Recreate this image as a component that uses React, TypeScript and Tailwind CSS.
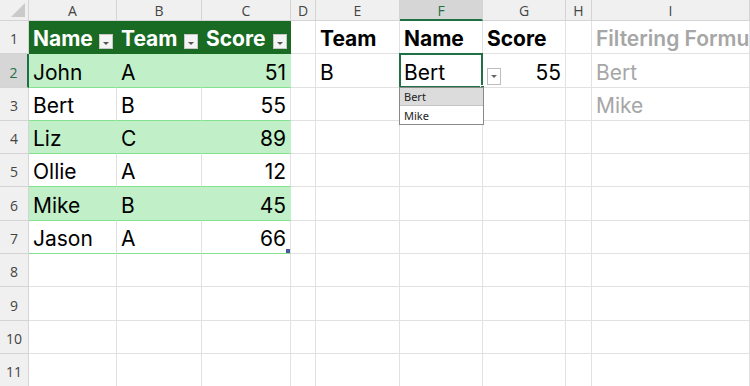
import React from 'react';

type Cell = {
  text?: string;
  align?: 'left' | 'right';
  kind?: 'th' | 'band' | 'plain' | 'bold' | 'faint' | 'faintBold';
  lastCol?: boolean;
  filter?: boolean;
};

const COLS = ['A', 'B', 'C', 'D', 'E', 'F', 'G', 'H', 'I'];

const people = [
  ['John', 'A', '51'],
  ['Bert', 'B', '55'],
  ['Liz', 'C', '89'],
  ['Ollie', 'A', '12'],
  ['Mike', 'B', '45'],
  ['Jason', 'A', '66'],
];

function buildRows(): Cell[][] {
  const rows: Cell[][] = [];
  rows.push([
    { text: 'Name', kind: 'th', filter: true },
    { text: 'Team', kind: 'th', filter: true },
    { text: 'Score', kind: 'th', filter: true, lastCol: true },
    {},
    { text: 'Team', kind: 'bold' },
    { text: 'Name', kind: 'bold' },
    { text: 'Score', kind: 'bold' },
    {},
    { text: 'Filtering Formula', kind: 'faintBold' },
  ]);
  people.forEach(([name, team, score], i) => {
    const kind = i % 2 === 0 ? 'band' : 'plain';
    const row: Cell[] = [
      { text: name, kind },
      { text: team, kind },
      { text: score, kind, align: 'right', lastCol: true },
      {},
      {},
      {},
      {},
      {},
      {},
    ];
    if (i === 0) {
      row[4] = { text: 'B' };
      row[5] = { text: 'Bert' };
      row[6] = { text: '55', align: 'right' };
      row[8] = { text: 'Bert', kind: 'faint' };
    }
    if (i === 1) row[8] = { text: 'Mike', kind: 'faint' };
    rows.push(row);
  });
  for (let i = 0; i < 4; i++) rows.push([{}, {}, {}, {}, {}, {}, {}, {}, {}]);
  return rows;
}

function FilterButton() {
  return (
    <div className="absolute right-[3px] bottom-[4px] w-[14px] h-[15px] bg-[#f4f4f4] border border-[#c8c8c8] flex items-end justify-center pb-[3px]">
      <svg width="6" height="3" viewBox="0 0 6 3">
        <polygon points="0,0 6,0 3,3" fill="#555" />
      </svg>
    </div>
  );
}

function cellClass(c: Cell, r: number) {
  const base =
    'relative flex items-end px-[4px] pb-[4px] text-[21px] leading-none whitespace-nowrap border-b border-r';
  let cls = base;
  if (c.kind === 'th') cls += ' bg-[#196b24] text-white font-bold border-b-[#196b24] border-r-[#196b24]';
  else if (c.kind === 'band') cls += ' bg-[#c1f0c8] text-black border-b-[#83e28e] border-r-[#c1f0c8]';
  else if (c.kind === 'plain') cls += ' bg-white text-black border-b-[#83e28e] border-r-[#e1e1e1]';
  else if (c.kind === 'bold') cls += ' text-black font-bold border-[#e1e1e1]';
  else if (c.kind === 'faint') cls += ' text-[#a6a6a6] border-[#e1e1e1] overflow-hidden';
  else if (c.kind === 'faintBold') cls += ' text-[#a6a6a6] font-semibold border-[#e1e1e1] overflow-hidden';
  else cls += ' text-black border-[#e1e1e1]';
  if (c.lastCol) cls += ' border-r-[#83e28e]';
  if (c.align === 'right') cls += ' justify-end';
  if (r === 7 && c.kind) cls += ' border-b-[#83e28e]';
  return cls;
}

export default function App() {
  const rows = buildRows();

  return (
    <div
      className="w-[750px] h-[386px] overflow-hidden bg-white grid grid-cols-[29px_88px_85px_89px_25px_84px_83px_83px_26px_1fr] grid-rows-[21px_repeat(11,33.3px)]"
      style={{ fontFamily: 'Inter, "Noto Sans", sans-serif' }}
    >
      {/* corner */}
      <div className="relative bg-[#f0f0f0] border-r border-b border-[#d4d4d4]">
        <svg className="absolute right-[3px] bottom-[3px]" width="14" height="14" viewBox="0 0 14 14">
          <polygon points="14,0 14,14 0,14" fill="#cacaca" />
        </svg>
      </div>
      {COLS.map((col) =>
        col === 'F' ? (
          <div
            key={col}
            className="flex items-center justify-center bg-[#d6d6d6] border-r border-[#d4d4d4] border-b-2 border-b-[#1e7145] text-[#1e7145] text-[14px] pt-[1px]"
            style={{ fontFamily: '"Open Sans", sans-serif' }}
          >
            {col}
          </div>
        ) : (
          <div
            key={col}
            className="flex items-center justify-center bg-[#f0f0f0] border-r border-b border-[#d4d4d4] text-[#444] text-[14px]"
            style={{ fontFamily: '"Open Sans", sans-serif' }}
          >
            {col}
          </div>
        )
      )}

      {rows.map((row, ri) => {
        const r = ri + 1;
        return (
          <React.Fragment key={r}>
            {r === 2 ? (
              <div
                className="flex items-end justify-center pb-[4px] bg-[#d6d6d6] border-b border-[#d4d4d4] border-r-2 border-r-[#1e7145] text-[#1e7145] text-[14px]"
                style={{ fontFamily: '"Open Sans", sans-serif' }}
              >
                {r}
              </div>
            ) : (
              <div
                className="flex items-end justify-center pb-[4px] bg-[#f0f0f0] border-r border-b border-[#d4d4d4] text-[#444] text-[14px]"
                style={{ fontFamily: '"Open Sans", sans-serif' }}
              >
                {r}
              </div>
            )}
            {row.map((c, ci) => (
              <div key={ci} className={cellClass(c, r)}>
                {c.text && <span>{c.text}</span>}
                {c.filter && <FilterButton />}
                {r === 7 && ci === 2 && (
                  <div className="absolute right-0 bottom-0 w-[4px] h-[4px] bg-[#4a57a6]" />
                )}
                {r === 2 && ci === 5 && (
                  <>
                    <div className="absolute inset-[-1px] border-2 border-[#1e7145] pointer-events-none" />
                    <div className="absolute right-[-3px] bottom-[-3px] w-[5px] h-[5px] bg-[#1e7145] border border-white" />
                    <div className="absolute left-[87px] top-[14px] w-[14px] h-[17px] bg-white border border-[#bdbdbd] flex items-center justify-center z-10">
                      <svg width="6" height="3" viewBox="0 0 6 3">
                        <polygon points="0,0 6,0 3,3" fill="#666" />
                      </svg>
                    </div>
                    <div
                      className="absolute left-[-1px] top-[33px] w-[85px] bg-white border border-[#8a8a8a] z-10 text-[11px] text-[#222] flex flex-col"
                      style={{ fontFamily: '"Noto Sans", sans-serif' }}
                    >
                      <div className="h-[18px] flex items-center px-[4px] bg-[#dcdcdc] border-b border-[#c4c4c4]">Bert</div>
                      <div className="h-[18px] flex items-center px-[4px]">Mike</div>
                    </div>
                  </>
                )}
              </div>
            ))}
          </React.Fragment>
        );
      })}
    </div>
  );
}
